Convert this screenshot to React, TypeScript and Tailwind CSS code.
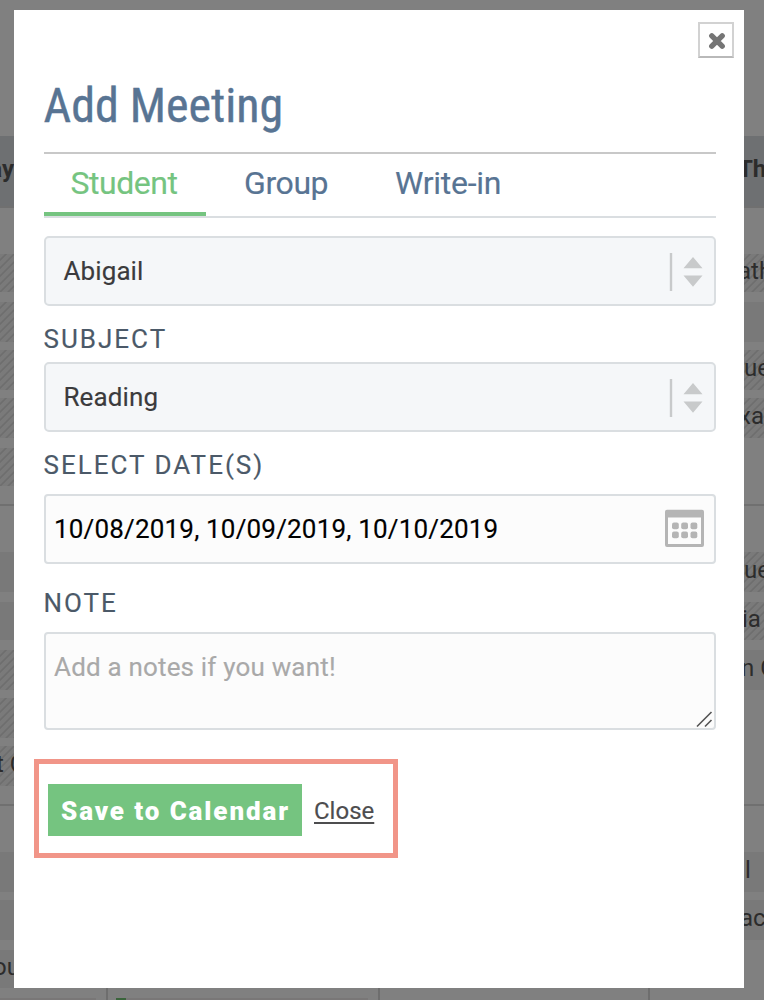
import type { ReactNode } from "react";

type Block = { gap: number; h: number; kind: "plain" | "hatch" | "line" | "head"; text?: string; x?: number };

const leftBlocks: Block[] = [
  { gap: 136, h: 70, kind: "head", text: "ay", x: 0 },
  { gap: 0, h: 2, kind: "line" },
  { gap: 46, h: 38, kind: "hatch" },
  { gap: 10, h: 40, kind: "hatch" },
  { gap: 8, h: 40, kind: "hatch" },
  { gap: 8, h: 40, kind: "hatch" },
  { gap: 10, h: 38, kind: "hatch" },
  { gap: 18, h: 2, kind: "line" },
  { gap: 46, h: 40, kind: "plain" },
  { gap: 10, h: 38, kind: "plain" },
  { gap: 10, h: 40, kind: "hatch" },
  { gap: 8, h: 40, kind: "hatch" },
  { gap: 8, h: 40, kind: "hatch", text: "t C", x: -4 },
  { gap: 18, h: 2, kind: "line" },
  { gap: 46, h: 40, kind: "plain" },
  { gap: 8, h: 40, kind: "plain" },
  { gap: 10, h: 38, kind: "plain", text: "ou", x: -7 },
];

const rightBlocks: Block[] = [
  { gap: 136, h: 70, kind: "head", text: "Th", x: -6 },
  { gap: 0, h: 2, kind: "line" },
  { gap: 46, h: 38, kind: "hatch", text: "ath", x: -6 },
  { gap: 10, h: 40, kind: "plain" },
  { gap: 8, h: 40, kind: "hatch", text: "ue", x: 0 },
  { gap: 8, h: 40, kind: "hatch", text: "xa", x: -5 },
  { gap: 66, h: 2, kind: "line" },
  { gap: 46, h: 40, kind: "hatch", text: "ue", x: 0 },
  { gap: 10, h: 38, kind: "hatch", text: "ia", x: -2 },
  { gap: 10, h: 40, kind: "plain", text: "n C", x: -3 },
  { gap: 114, h: 2, kind: "line" },
  { gap: 46, h: 40, kind: "plain", text: "l", x: 1 },
  { gap: 8, h: 40, kind: "plain", text: "ac", x: -4 },
];

const fills = {
  plain: "bg-[#797979]",
  hatch: "bg-[repeating-linear-gradient(135deg,#7a7a7a_0px,#7a7a7a_3px,#6e6e6e_4px,#6e6e6e_4.7px,#7a7a7a_5.66px)]",
  line: "bg-[#707070]",
  head: "bg-[#6e7072] font-bold",
};

function Strip({ blocks, side }: { blocks: Block[]; side: "left" | "right" }) {
  return (
    <div className={side === "left" ? "w-[14px] overflow-hidden" : "w-5 overflow-hidden"}>
      {blocks.map((b, i) => (
        <div
          key={i}
          className={`flex items-center whitespace-nowrap text-[24px] leading-none text-[#2c2c2c] ${fills[b.kind]} ${b.kind === "head" && side === "left" ? "justify-end" : ""}`}
          style={{ marginTop: b.gap, height: b.h }}
        >
          {b.text && (
            <span className="block -translate-y-[2px]" style={{ marginLeft: b.x }}>
              {b.text}
            </span>
          )}
        </div>
      ))}
    </div>
  );
}

function Select({ children }: { children: ReactNode }) {
  return (
    <div className="flex h-[70px] items-center justify-between rounded-[5px] border-2 border-[#dadee1] bg-[#f5f7f9] pl-[17.500px] pr-[9px]">
      <span className="text-[26px] tracking-[0.1px] text-[#3b3b3d] [-webkit-text-stroke:0.15px_#3b3b3d]">{children}</span>
      <svg width="36" height="40" viewBox="0 0 36 40" fill="#c8cacb" className="translate-y-px">
        <rect x="0.8" y="1" width="2.4" height="38" />
        <path d="M24 5 33.500 16.300h-19zM14.500 23.500h19L24 34.800z" />
      </svg>
    </div>
  );
}

function Label({ children, className }: { children: string; className: string }) {
  return (
    <div className={`flex items-center text-[26px] leading-none tracking-[2px] text-[#4b5968] [-webkit-text-stroke:0.15px_#4b5968] ${className}`}>
      <span className="-ml-[0.5px]">{children}</span>
    </div>
  );
}

export default function App() {
  return (
    <div className="relative h-[1000px] w-[764px] overflow-hidden bg-[#808080] font-['Roboto',sans-serif]">
      <div className="flex h-[988px] justify-between">
        <Strip blocks={leftBlocks} side="left" />
        <Strip blocks={rightBlocks} side="right" />
      </div>
      <div className="flex h-3 items-end">
        <div className="h-[2px] w-24 bg-[#797777]" />
        <div className="ml-[10px] h-3 w-[2px] bg-[#6e6e6e]" />
        <div className="ml-2 h-[2px] w-[10px] bg-[#3a643b]" />
        <div className="h-[2px] w-[242px] bg-[#797777]" />
        <div className="ml-[10px] h-3 w-[2px] bg-[#6e6e6e]" />
        <div className="ml-[268px] h-3 w-[2px] bg-[#6e6e6e]" />
      </div>

      <div role="dialog" className="absolute left-[14px] top-[10px] flex h-[978px] w-[730px] flex-col bg-white pl-[30px] pr-7">
        <div className="-mr-[18px] flex h-12 items-end justify-end">
          <button aria-label="Dismiss" className="flex size-9 items-center justify-center border-2 border-[#d2d2d2] border-b-[#b9b9b9] bg-white">
            <svg width="18" height="18" viewBox="0 0 18 18" stroke="#757575" strokeWidth="5.4" strokeLinecap="round" className="translate-x-px translate-y-px">
              <path d="M3.800 3.800 14.200 14.200M14.200 3.800 3.800 14.200" />
            </svg>
          </button>
        </div>
        <h1 className="flex h-24 items-center border-b-2 border-[#c8c8c8] pt-[2px] text-[#587493]">
          <span className="-ml-[0.5px] block whitespace-nowrap font-['Roboto_Condensed',Roboto,sans-serif] text-[48px] leading-none [-webkit-text-stroke:0.4px_#587493]">Add Meeting</span>
        </h1>
        <div className="flex h-16 items-stretch border-b-2 border-[#dadee1] text-[32px] leading-none text-[#587493]">
          <div className="flex w-[162px] justify-center border-b-4 border-[#75c480] pl-px pr-[3px] pt-[13px] tracking-[-0.45px] text-[#75c480] [-webkit-text-stroke:0.15px_#75c480]">Student</div>
          <div className="w-[151px] pl-[38px] pt-[13px] tracking-[-0.4px] [-webkit-text-stroke:0.15px_#587493]">Group</div>
          <div className="pl-[38px] pt-[13px] tracking-[-0.3px] [-webkit-text-stroke:0.15px_#587493]">Write-in</div>
        </div>
        <div className="h-[18px] shrink-0" />
        <Select>Abigail</Select>
        <Label className="h-14 pt-[10px]">SUBJECT</Label>
        <Select>Reading</Select>
        <Label className="h-[62px] pt-[4px]">SELECT DATE(S)</Label>
        <div className="flex h-[70px] items-center justify-between rounded-[4px] border-2 border-[#dadee1] bg-[#fcfcfc] pl-2 pr-[8px]">
          <span className="text-[26px] tracking-[0.18px] text-black [-webkit-text-stroke:0.15px_black]">10/08/2019, 10/09/2019, 10/10/2019</span>
          <svg width="42" height="40" viewBox="0 0 42 40" fill="#b5b5b5">
            <path fillRule="evenodd" d="M3 .8h35a2 2 0 0 1 2 2V36a2 2 0 0 1-2 2H3a2 2 0 0 1-2-2V2.800a2 2 0 0 1 2-2zM4 8.500V35h33V8.500z" />
            <rect x="8" y="13.500" width="6.800" height="6.800" rx="2" />
            <rect x="17.200" y="13.500" width="6.800" height="6.800" rx="2" />
            <rect x="26.500" y="13.500" width="6.800" height="6.800" rx="2" />
            <rect x="8" y="22.500" width="6.800" height="6.800" rx="2" />
            <rect x="17.200" y="22.500" width="6.800" height="6.800" rx="2" />
            <rect x="26.500" y="22.500" width="6.800" height="6.800" rx="2" />
          </svg>
        </div>
        <Label className="h-[68px] pt-[10px]">NOTE</Label>
        <div className="flex h-[98px] items-end justify-between rounded-[4px] border-2 border-[#dadee1] bg-[#fcfcfc] pl-2">
          <span className="self-start pt-[13px] text-[26px] leading-[40px] tracking-[0.18px] text-[#a9a9a9] [-webkit-text-stroke:0.15px_#a9a9a9]">Add a notes if you want!</span>
          <svg width="20" height="18" viewBox="0 0 20 18" stroke="#555" strokeWidth="1.600">
            <path d="M3 16.500 17.500 2M11 16.500 17.500 10" />
          </svg>
        </div>
        <div className="-ml-[10px] mt-[29px] flex h-[99px] w-[364px] items-center border-[5px] border-[#f19588] pl-[9px] pt-[3px]">
          <button className="h-[52px] w-[254px] whitespace-nowrap bg-[#75c480] pl-px pt-[2px] text-[26px] font-black leading-none tracking-[1.900px] text-white">Save to Calendar</button>
          <a className="ml-3 pt-[2px] text-[24px] leading-none text-[#4d4d4f] underline decoration-2 underline-offset-[3px] [-webkit-text-stroke:0.15px_#4d4d4f]">Close</a>
        </div>
      </div>
    </div>
  );
}
